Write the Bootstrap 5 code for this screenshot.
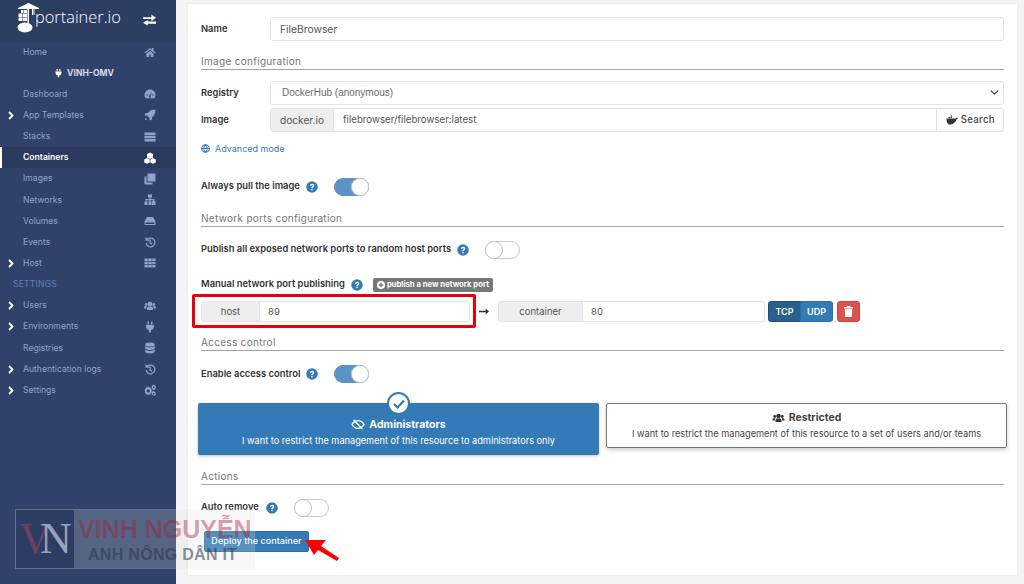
<!DOCTYPE html>
<html lang="en">
<head>
<meta charset="utf-8">
<title>Portainer</title>
<link href="https://cdn.jsdelivr.net/npm/bootstrap@5.3.0/dist/css/bootstrap.min.css" rel="stylesheet">
<style>
html,body{height:584px;overflow:hidden}
body{font-family:Inter,"Liberation Sans",sans-serif;background:#f4f4f4;color:#333;font-size:9.4px;position:relative}
.app-shell{height:584px}
.side-bar{width:176px;background:#30426a;flex:none}
.side-head{height:41.5px;background:#2d3e63;padding:0 0 0 17px}
.logo-mark{margin-top:-6px;flex:none}
.logo-word{font-family:"Open Sans",sans-serif;font-weight:300;font-size:16.4px;color:#fff;line-height:1;margin-left:-5px;margin-top:-7px}
.swap-ico{margin-left:22px;margin-top:-2px;color:#fff}
.side-list{list-style:none;margin:0;padding:0}
.side-list li{height:21.15px;display:flex;align-items:center;padding:0 20px 0 23px;color:#8ea4cd;font-size:8.6px;position:relative}
.side-list li .side-ico{margin-left:auto;width:12px;height:12px;fill:#8ea4cd;flex:none}
.side-list li.current{background:#2a3a5d;color:#fff;font-weight:600;border-left:2px solid #fff;padding-left:21px}
.side-list li.current .side-ico{fill:#fff}
.side-list li.env-name{color:#d6deec;font-weight:700;justify-content:center;padding:0 8px 0 0}
.side-list li.group-title{color:#5f7fb8;padding-left:13px;letter-spacing:.2px}
.caret-ico{position:absolute;left:8px;top:6px;width:6px;height:9px;fill:none;stroke:#fff;stroke-width:1.8}
.main-area{padding:3px 6px 8px 11px;min-width:0}
.form-sheet{background:#fff;height:573px;padding:13px 13px 0;border:1px solid #efefef}
.field-row{display:flex;align-items:center}
.field-label{width:69px;flex:none;font-weight:600;color:#333}
.form-control.ctl,.form-select.ctl,.ctl-addon,.ctl-btn{font-size:9.7px;height:23.5px;min-height:0;padding:0 9px;color:#555;border-color:#e3e3e3;border-radius:3px;line-height:1}
.form-control.name-ctl{font-size:10.3px}
.form-select.ctl{font-family:"Liberation Sans",sans-serif;font-size:10px;color:#6b6b6b;background-position:right 3px center;background-size:11px 9px;padding-left:11px}
.ctl-addon{background:#eee;justify-content:center;font-size:10.2px}
.ctl-btn{background:#fff;font-weight:500;letter-spacing:.3px;padding:0 8px 0 9px;display:flex;align-items:center;gap:3px;color:#444}
.sect-title{color:#777;font-size:10px;letter-spacing:.3px;border-bottom:1px solid #a5a5a5;height:14px;line-height:11px}
.blue-link{color:#337ab7;font-size:9px;text-decoration:none}
.help-ico{width:12px;height:12px;flex:none;margin-left:6px}
.pill-switch{width:35px;height:18px;border-radius:9px;border:1px solid #c9c9c9;background:#fff;position:relative;flex:none;display:block;margin-left:16px}
.pill-switch::after{content:"";position:absolute;left:0;top:0;width:16px;height:16px;border-radius:50%;background:#fff;box-shadow:0 0 0 1px #c9c9c9}
.pill-switch.is-on{background:#5b93c6;border-color:#5b93c6}
.pill-switch.is-on::after{left:17px;box-shadow:0 0 1px 1px #d0d0d0}
.grey-tag{background:#777;color:#fff;font-size:7.7px;font-weight:700;border-radius:2px;height:14px;display:inline-flex;align-items:center;padding:0 4px;gap:2px;margin-left:10px}
.port-group{height:21px}
.port-group .ctl,.port-group .ctl-addon{height:21px;font-size:9.5px}
.port-group .form-control.ctl{padding-left:8px}
.port-host{width:269px}
.port-cont{width:267px}
.port-arrow{margin:0 9px;flex:none}
.proto-btn{height:21px;width:33px;font-size:9px;font-weight:600;padding:0;line-height:1;border-radius:3px;background:#337ab7;color:#fff;border:1px solid #2e6da4}
.proto-btn.is-sel{background:#286090;border-color:#204d74}
.del-btn{height:21px;width:23px;padding:0;background:#d9534f;border:1px solid #d43f3a;border-radius:3px;margin-left:4px;display:flex;align-items:center;justify-content:center}
.access-card{flex:none;width:401px;text-align:center;position:relative;border-radius:2px}
.access-on{background:#337ab7;color:#fff;height:52px;padding-top:15px;box-shadow:0 1px 3px rgba(0,0,0,.25)}
.access-off{background:#fff;color:#444;height:45px;padding-top:7px;border:1px solid #777;box-shadow:0 2px 4px rgba(0,0,0,.2);margin-left:7px}
.access-title{font-weight:700;font-size:10.5px;display:flex;align-items:center;justify-content:center;gap:4px;line-height:13px;margin-bottom:4px}
.access-text{font-size:9.2px;line-height:12px}
.check-badge{position:absolute;left:189px;top:-11px;width:23px;height:23px;border-radius:50%;background:#fff;border:2px solid #337ab7;display:flex;align-items:center;justify-content:center}
.deploy-btn{background:#337ab7;border:1px solid #2e6da4;color:#fff;font-size:9.1px;font-weight:500;height:21px;width:105px;padding:0;border-radius:2px;line-height:1}
.mark-box{position:absolute;left:192px;top:294px;width:284px;height:34px;border:3px solid #e8000b;border-radius:2px;pointer-events:none}
.mark-arrow{position:absolute;left:301px;top:537px;pointer-events:none}
.water-mark{position:absolute;left:15px;top:509px;width:240px;height:60px;background:rgba(225,225,225,.22);pointer-events:none;border:1px solid rgba(255,255,255,.08);display:flex;font-family:"Liberation Sans",sans-serif}
.water-logo{width:58px;height:58px;background:#2c3c62;font-family:"Liberation Serif",serif;font-size:44px;display:flex;align-items:center;justify-content:center;letter-spacing:-11px;padding-right:10px;flex:none}
.water-v{color:#6e3f62}
.water-n{color:#98a2b9}
.water-one{position:absolute;left:62px;top:5px;font-weight:700;font-size:25px;color:rgba(160,30,55,.42);white-space:nowrap;line-height:28px}
.water-two{position:absolute;left:72px;top:35px;font-weight:700;font-size:16px;color:rgba(40,50,75,.55);white-space:nowrap;line-height:20px;letter-spacing:.3px}
</style>
</head>
<body>
<svg width="0" height="0" class="position-absolute">
<defs>
<symbol id="i-home" viewBox="0 0 24 24"><path d="M12 4 1 13l1.500 1.800L12 7l9.500 7.800L23 13l-4-3.300V4h-3v3.200zM5 15.500V22h5.500v-5h3v5H19v-6.500L12 9.700z"/></symbol>
<symbol id="i-plug" viewBox="0 0 24 24"><path d="M7 1h3v6H7zM14 1h3v6h-3zM4 8h16v3c0 4-2.500 6.500-6 7.200V23h-4v-4.800C6.500 17.500 4 15 4 11z"/></symbol>
<symbol id="i-gauge" viewBox="0 0 24 24"><path fill-rule="evenodd" d="M12 3C5.900 3 1 7.900 1 14c0 2.500.8 4.800 2.200 6.600h17.600C22.200 18.800 23 16.500 23 14 23 7.900 18.100 3 12 3zm1.500 14.500a2 2 0 1 1-3-2.200L14 9l1 .5-2 6.200c.3.500.5 1.100.5 1.800zM5 13h3v2H5zm11 0h3v2h-3z"/></symbol>
<symbol id="i-rocket" viewBox="0 0 24 24"><path d="M23 1c-7 0-12 2-15.500 7H3l-2 5h5l5 5v5l5-2v-4.500C21 13 23 8 23 1zM4 18c-2 1-2 4-2 4s3 0 4-2z"/></symbol>
<symbol id="i-list" viewBox="0 0 24 24"><path d="M1 3h22v5H1zM1 9.500h22v5H1zM1 16h22v5H1z"/></symbol>
<symbol id="i-cubes" viewBox="0 0 24 24"><path d="M12 1l6 3v7l-6 3-6-3V4zM6 12l5.500 2.800V21L6 23.500 .5 21v-6.200zM18 12l5.500 2.800V21L18 23.500 12.500 21v-6.200z"/></symbol>
<symbol id="i-clone" viewBox="0 0 24 24"><path d="M8 1h14a1 1 0 0 1 1 1v14a1 1 0 0 1-1 1H8a1 1 0 0 1-1-1V2a1 1 0 0 1 1-1zM2 7h3v11a1 1 0 0 0 1 1h11v3a1 1 0 0 1-1 1H2a1 1 0 0 1-1-1V8a1 1 0 0 1 1-1z"/></symbol>
<symbol id="i-site" viewBox="0 0 24 24"><path d="M8 1h8v6h-3v3h8v5h2v7h-7v-7h2v-2.500h-5.500V15H15v7H9v-7h1.500v-2.500H5V15h2v7H1v-7h2v-5h8V7H8z"/></symbol>
<symbol id="i-hdd" viewBox="0 0 24 24"><path fill-rule="evenodd" d="M6 4h12l5 9v7H1v-7zM3 15v3h18v-3z"/></symbol>
<symbol id="i-hist" viewBox="0 0 24 24"><path d="M3 2l3.500 3.200A10 10 0 1 1 3 14h2.600A7.500 7.500 0 1 0 8.300 7L11 9.500H3zM11 7h2.500v6l3.500 2.500-1.400 2L11 14.300z"/></symbol>
<symbol id="i-th" viewBox="0 0 24 24"><path d="M1 3h6.500v5H1zM8.500 3h7v5h-7zM16.500 3H23v5h-6.500zM1 9.500h6.500v5H1zM8.500 9.500h7v5h-7zM16.500 9.500H23v5h-6.500zM1 16h6.500v5H1zM8.500 16h7v5h-7zM16.500 16H23v5h-6.500z"/></symbol>
<symbol id="i-users" viewBox="0 0 24 24"><circle cx="12" cy="8" r="4.500"/><circle cx="4.500" cy="9" r="2.800"/><circle cx="19.500" cy="9" r="2.800"/><path d="M6 20v-3c0-2.500 2-3.800 3.500-3.800h5c1.500 0 3.500 1.300 3.500 3.800v3zM0 17v-2c0-1.500 1-2.500 2.500-2.500H6C5 13.500 4.500 15 4.500 17zM24 17v-2c0-1.500-1-2.500-2.500-2.500H18c1 1 1.500 2.500 1.500 4.500z"/></symbol>
<symbol id="i-db" viewBox="0 0 24 24"><ellipse cx="12" cy="5" rx="9.500" ry="4"/><path d="M2.500 7.500C4 10 8 10.800 12 10.800s8-.8 9.500-3.300V12c0 2.500-4.300 4-9.500 4s-9.500-1.500-9.500-4zM2.500 14.500C4 17 8 17.800 12 17.800s8-.8 9.500-3.300V19c0 2.500-4.300 4-9.500 4s-9.500-1.500-9.500-4z"/></symbol>
<symbol id="i-cogs" viewBox="0 0 24 24"><path fill-rule="evenodd" d="M8.500 4.500l1.800 2.400 2.900-.3.400 2.900 2.400 1.800-1.400 2.500 1.400 2.500-2.400 1.800-.4 2.900-2.900-.3-1.800 2.400-1.800-2.400-2.900.3-.4-2.900L1 16.300l1.400-2.500L1 11.300l2.400-1.800.4-2.900 2.900.3zM8.500 10.500a3.300 3.300 0 1 0 0 6.600 3.300 3.300 0 0 0 0-6.600z"/><path fill-rule="evenodd" d="M19.500 1l1 1.500 1.800-.2.300 1.800 1.400 1-1 1.600 1 1.600-1.400 1-.3 1.800-1.800-.2-1 1.500-1-1.500-1.800.2-.3-1.800-1.400-1 1-1.600-1-1.600 1.400-1 .3-1.800 1.800.2zM19.500 5a1.700 1.700 0 1 0 0 3.400 1.700 1.700 0 0 0 0-3.400zM19.500 14l1 1.500 1.800-.2.300 1.800 1.400 1-1 1.600 1 1.600-1.400 1-.3 1-2.800-.2-1-.2-1.800-.8-.3-.8-1.400-1 1-1.600-1-1.600 1.400-1 .3-1.800 1.800.2zM19.500 18a1.700 1.700 0 1 0 0 3.400 1.700 1.700 0 0 0 0-3.400z"/></symbol>
<symbol id="i-help" viewBox="0 0 24 24"><circle cx="12" cy="12" r="11.500" fill="#337ab7"/><path d="M8 9.500C8 7 9.800 5.500 12.300 5.500S16.500 7 16.500 9.300c0 3-3.200 3.200-3.200 5.200h-2.800c0-3.300 3-3.500 3-5.100 0-.8-.6-1.300-1.400-1.300-1 0-1.400.6-1.500 1.700zM10.500 15.800h2.800v2.800h-2.800z" fill="#fff"/></symbol>
<symbol id="i-caret" viewBox="0 0 6 9"><path d="M1 1l3.500 3.500L1 8"/></symbol>
</defs>
</svg>
<div class="app-shell d-flex">
  <nav class="side-bar">
    <div class="side-head d-flex align-items-center">
      <svg class="logo-mark" width="23" height="31" viewBox="0 0 23 31" fill="#fff"><path d="M1 6 11.500 1 22 6v1H1z"/><path d="M10.500 1h1.500v23h-1.500zM15 7h1v6h-1zM16.500 7h1v6h-1z"/><path d="M4 8h2.500v3H4zM7 8h3v3H7zM1.500 11.500h3.500v3.500H1.500zM5.500 11.500h4.500v3.500H5.500zM1.500 15.500h3.500v3.500H1.500zM5.500 15.500h4.500v3.500H5.500z"/><ellipse cx="8" cy="25.500" rx="7.500" ry="5"/></svg>
      <span class="logo-word">portainer.io</span>
      <svg class="swap-ico" width="13" height="12" viewBox="0 0 14 12" fill="#fff"><path d="M0 3h9V0l5 3.500L9 7V5H0zM14 7.500H5V6L0 9l5 3v-2h9z"/></svg>
    </div>
    <ul class="side-list">
      <li>Home<svg class="side-ico"><use href="#i-home"/></svg></li>
      <li class="env-name"><svg width="9" height="10" fill="#fff" class="me-1"><use href="#i-plug"/></svg>VINH-OMV</li>
      <li>Dashboard<svg class="side-ico"><use href="#i-gauge"/></svg></li>
      <li><svg class="caret-ico"><use href="#i-caret"/></svg>App Templates<svg class="side-ico"><use href="#i-rocket"/></svg></li>
      <li>Stacks<svg class="side-ico"><use href="#i-list"/></svg></li>
      <li class="current">Containers<svg class="side-ico"><use href="#i-cubes"/></svg></li>
      <li>Images<svg class="side-ico"><use href="#i-clone"/></svg></li>
      <li>Networks<svg class="side-ico"><use href="#i-site"/></svg></li>
      <li>Volumes<svg class="side-ico"><use href="#i-hdd"/></svg></li>
      <li>Events<svg class="side-ico"><use href="#i-hist"/></svg></li>
      <li><svg class="caret-ico"><use href="#i-caret"/></svg>Host<svg class="side-ico"><use href="#i-th"/></svg></li>
      <li class="group-title">SETTINGS</li>
      <li><svg class="caret-ico"><use href="#i-caret"/></svg>Users<svg class="side-ico"><use href="#i-users"/></svg></li>
      <li><svg class="caret-ico"><use href="#i-caret"/></svg>Environments<svg class="side-ico"><use href="#i-plug"/></svg></li>
      <li>Registries<svg class="side-ico"><use href="#i-db"/></svg></li>
      <li><svg class="caret-ico"><use href="#i-caret"/></svg>Authentication logs<svg class="side-ico"><use href="#i-hist"/></svg></li>
      <li><svg class="caret-ico"><use href="#i-caret"/></svg>Settings<svg class="side-ico"><use href="#i-cogs"/></svg></li>
    </ul>
  </nav>
  <main class="main-area flex-grow-1">
    <div class="form-sheet">
      <div class="field-row" style="margin-bottom:15px">
        <label class="field-label">Name</label>
        <input class="form-control ctl name-ctl" value="FileBrowser">
      </div>
      <div class="sect-title">Image configuration</div>
      <div class="field-row" style="margin-top:11.5px">
        <label class="field-label">Registry</label>
        <select class="form-select ctl"><option>DockerHub (anonymous)</option></select>
      </div>
      <div class="field-row" style="margin-top:3.500px">
        <label class="field-label">Image</label>
        <div class="input-group flex-nowrap">
          <span class="input-group-text ctl-addon" style="width:64px">docker.io</span>
          <input class="form-control ctl" value="filebrowser/filebrowser:latest">
          <button class="btn ctl-btn border" type="button"><svg width="12" height="10" viewBox="0 0 24 18" fill="#333"><path d="M5 3h3v2H5zM9 3h3v2H9zM9 0h3v2H9zM1 6h18c1 0 2-1 2.500-2 1 .5 2 1.500 2.500 2-1 1.500-2 1.500-3 1.500C19 14 14 18 8 18 3 18 1 13 1 6z"/></svg>Search</button>
        </div>
      </div>
      <div class="d-flex align-items-center" style="margin-top:11px;height:12px;gap:5px">
        <svg width="9" height="9" viewBox="0 0 24 24" fill="none" stroke="#337ab7" stroke-width="3"><circle cx="12" cy="12" r="10"/><path d="M2 12h20M12 2c-6 6-6 14 0 20M12 2c6 6 6 14 0 20"/></svg>
        <a class="blue-link" href="#">Advanced mode</a>
      </div>
      <div class="field-row" style="margin-top:23px">
        <span class="fw-semibold">Always pull the image</span>
        <svg class="help-ico"><use href="#i-help"/></svg>
        <span class="pill-switch is-on"></span>
      </div>
      <div class="sect-title" style="margin-top:17px">Network ports configuration</div>
      <div class="field-row" style="margin-top:14px">
        <span class="fw-semibold">Publish all exposed network ports to random host ports</span>
        <svg class="help-ico"><use href="#i-help"/></svg>
        <span class="pill-switch"></span>
      </div>
      <div class="field-row" style="margin-top:19px;height:14px">
        <span class="fw-semibold">Manual network port publishing</span>
        <svg class="help-ico"><use href="#i-help"/></svg>
        <span class="grey-tag"><svg width="8" height="8" viewBox="0 0 24 24"><circle cx="12" cy="12" r="12" fill="#fff"/><path d="M10 5h4v5h5v4h-5v5h-4v-5H5v-4h5z" fill="#777"/></svg>publish a new network port</span>
      </div>
      <div class="d-flex align-items-center" style="margin-top:9.500px">
        <div class="input-group flex-nowrap port-group port-host">
          <span class="input-group-text ctl-addon" style="width:59px">host</span>
          <input class="form-control ctl" value="89">
        </div>
        <svg class="port-arrow" width="10" height="7" viewBox="0 0 12 7" fill="#333"><path d="M0 2.700h8V0l4 3.500L8 7V4.300H0z"/></svg>
        <div class="input-group flex-nowrap port-group port-cont">
          <span class="input-group-text ctl-addon" style="width:85px">container</span>
          <input class="form-control ctl" value="80">
        </div>
        <div class="btn-group" style="margin-left:3px">
          <button class="btn proto-btn is-sel" type="button">TCP</button>
          <button class="btn proto-btn" type="button">UDP</button>
        </div>
        <button class="btn del-btn" type="button" aria-label="Remove"><svg width="9" height="11" viewBox="0 0 18 22" fill="#fff"><path d="M6 0h6l1 2h5v3H0V2h5zM1.500 6.500h15L15.500 22h-13z"/></svg></button>
      </div>
      <div class="sect-title" style="margin-top:15px">Access control</div>
      <div class="field-row" style="margin-top:14px">
        <span class="fw-semibold">Enable access control</span>
        <svg class="help-ico"><use href="#i-help"/></svg>
        <span class="pill-switch is-on"></span>
      </div>
      <div class="d-flex align-items-start" style="margin:20px 0 0 -3px;width:810px">
        <div class="access-card access-on">
          <span class="check-badge"><svg width="12" height="10" viewBox="0 0 12 10" fill="none" stroke="#337ab7" stroke-width="2.200"><path d="M1 5l3.500 3.500L11 1.500"/></svg></span>
          <div class="access-title"><svg width="14" height="11" viewBox="0 0 24 20" fill="none" stroke="#fff" stroke-width="2.600"><path d="M1 10c3-5 7-7 11-7s8 2 11 7c-3 5-7 7-11 7s-8-2-11-7zM4 2l16 16"/></svg>Administrators</div>
          <div class="access-text">I want to restrict the management of this resource to administrators only</div>
        </div>
        <div class="access-card access-off">
          <div class="access-title"><svg width="13" height="12" fill="#333"><use href="#i-users"/></svg>Restricted</div>
          <div class="access-text">I want to restrict the management of this resource to a set of users and/or teams</div>
        </div>
      </div>
      <div class="sect-title" style="margin-top:16px">Actions</div>
      <div class="field-row" style="margin-top:13.500px">
        <span class="fw-semibold">Auto remove</span>
        <svg class="help-ico" style="margin-left:7px"><use href="#i-help"/></svg>
        <span class="pill-switch"></span>
      </div>
      <div style="margin:14px 0 0 3px"><button class="btn deploy-btn" type="button">Deploy the container</button></div>
    </div>
  </main>
</div>
<div class="mark-box"></div>
<svg class="mark-arrow" width="40" height="26" viewBox="0 0 40 26"><path d="M4 3 25 3 20 9 38 21 36 24 17 13 13 18z" fill="#f00"/></svg>
<div class="water-mark">
  <div class="water-logo"><span class="water-v">V</span><span class="water-n">N</span></div>
  <div class="water-one">VINH NGUYỄN</div>
  <div class="water-two">ANH NÔNG DÂN IT</div>
</div>
<script src="https://cdn.jsdelivr.net/npm/bootstrap@5.3.0/dist/js/bootstrap.bundle.min.js"></script>
</body>
</html>
